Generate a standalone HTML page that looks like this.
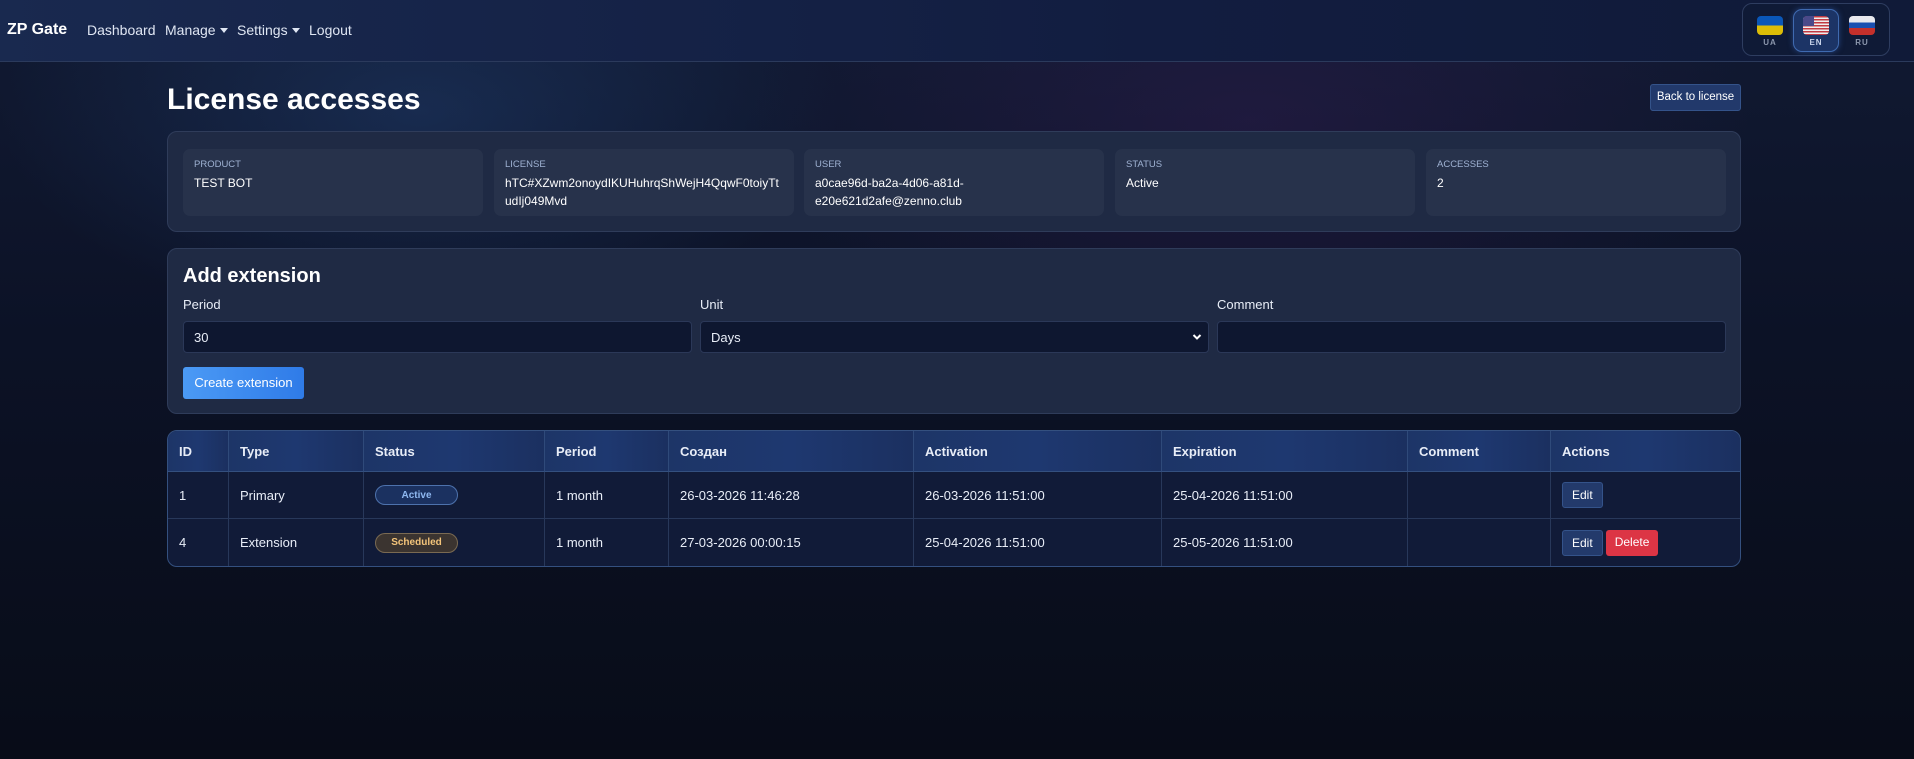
<!DOCTYPE html>
<html><head><meta charset="utf-8"><style>
*{box-sizing:border-box;margin:0;padding:0}
body{width:1914px;height:759px;overflow:hidden;font-family:"Liberation Sans","Noto Sans CJK SC",sans-serif;color:#e8edf7;font-size:14px;
background:radial-gradient(ellipse 420px 220px at 420px 110px,rgba(40,80,140,.35),transparent),radial-gradient(ellipse 500px 260px at 1250px 120px,rgba(60,30,90,.35),transparent),linear-gradient(180deg,#111a33 0%,#0c1226 45%,#080c18 100%);position:relative}
.a{position:absolute}
.nav{left:0;top:0;width:1914px;height:62px;background:linear-gradient(90deg,#19294f,#121d40 60%,#101a38);border-bottom:1px solid #2b3a5c}
.nav span{position:absolute;top:22px;font-size:14px;color:#dfe6f3}
.brand{font-weight:bold;font-size:16px!important;color:#fff!important;top:21px!important}
.car{display:inline-block;border-left:4px solid transparent;border-right:4px solid transparent;border-top:5px solid #dfe6f3;vertical-align:2px;margin-left:4px}
.lang{left:1742px;top:3px;width:148px;height:53px;border:1px solid #2e3d60;border-radius:10px;background:#0f1a36}
.flag{position:absolute;width:26px;height:19px;border-radius:4px;overflow:hidden;top:12px}
.ll{position:absolute;top:34px;font-size:8px;font-weight:bold;color:#8c97ad;letter-spacing:1px;width:30px;text-align:center}
.card{background:#1f2a44;border:1px solid #2f3c5a;border-radius:10px}
.box{position:absolute;top:17px;height:67px;width:300px;background:#27324b;border-radius:7px;padding:10px 11px}
.box .l{font-size:9.5px;color:#9fb2d3;text-transform:uppercase}
.box .v{font-size:12px;color:#fff;margin-top:4px;line-height:18px}
.inp{position:absolute;top:72px;height:32px;background:#0e1730;border:1px solid #2b3858;border-radius:4px;padding:8px 10px;font-size:13px;color:#e8edf7}
.lab{position:absolute;top:48px;font-size:13px;color:#e8edf7}
table{position:absolute;left:167px;top:430px;width:1574px;border-collapse:separate;border-spacing:0;border:1px solid #34507f;border-radius:10px;overflow:hidden;background:#111b38}
th{height:41px;background:linear-gradient(90deg,#1d3567,#1e3870 50%,#1b3060);text-align:left;font-weight:bold;font-size:13px;padding:0 11px;border-right:1px solid #2f4a7a;border-bottom:1px solid #34507f}
td{height:47px;padding:0 11px;font-size:13px;border-right:1px solid #28385a;border-bottom:1px solid #28385a}
tr:last-child td{border-bottom:none}
th:last-child,td:last-child{border-right:none}
.pill{display:inline-flex;align-items:center;justify-content:center;width:83px;height:20px;border-radius:10px;font-size:10px;font-weight:bold;vertical-align:middle}
.btn{display:inline-block;height:26px;padding:0 9px;line-height:25px;font-size:12px;border-radius:3px;vertical-align:middle}
.ed{background:#233a6b;border:1px solid #34538a;color:#fff}
.de{background:#dc3545;color:#fff;margin-left:3px}
</style></head><body>
<div class="a nav">
<span class="brand" style="left:7px">ZP Gate</span>
<span style="left:87px">Dashboard</span>
<span style="left:165px">Manage<i class="car"></i></span>
<span style="left:237px">Settings<i class="car"></i></span>
<span style="left:309px">Logout</span>
</div>
<div class="a lang">
<div class="flag" style="left:14px;background:linear-gradient(#0a57b8 50%,#dcbd07 50%)"></div>
<div class="ll" style="left:12px">UA</div>
<div style="position:absolute;left:50px;top:5px;width:46px;height:43px;border:1px solid #3f6ab0;border-radius:9px;background:#1c3466;box-shadow:0 0 6px rgba(60,110,200,.5)"></div>
<div class="flag" style="left:60px;background:repeating-linear-gradient(#c23a42 0 1.5px,#eee 1.5px 3px)"><div style="width:11px;height:10px;background:#4a4a8a"></div></div>
<div class="ll" style="left:58px;color:#c8d3ea">EN</div>
<div class="flag" style="left:106px;background:linear-gradient(#e9e9ee 33%,#1a4fb0 33% 62%,#c4302b 62%)"></div>
<div class="ll" style="left:104px">RU</div>
</div>
<div class="a" style="left:167px;top:83px;font-size:30px;font-weight:bold;color:#fff">License accesses</div>
<div class="a" style="left:1650px;top:84px;width:91px;height:27px;background:#22396b;border:1px solid #34538a;border-radius:3px;font-size:11.5px;line-height:25px;text-align:center;color:#fff">Back to license</div>
<div class="a card" style="left:167px;top:131px;width:1574px;height:101px">
<div class="box" style="left:15px"><div class="l">Product</div><div class="v">TEST BOT</div></div>
<div class="box" style="left:326px"><div class="l">License</div><div class="v">hTC#XZwm2onoydIKUHuhrqShWejH4QqwF0toiyTt udIj049Mvd</div></div>
<div class="box" style="left:636px"><div class="l">User</div><div class="v">a0cae96d-ba2a-4d06-a81d-<br>e20e621d2afe@zenno.club</div></div>
<div class="box" style="left:947px"><div class="l">Status</div><div class="v">Active</div></div>
<div class="box" style="left:1258px"><div class="l">Accesses</div><div class="v">2</div></div>
</div>
<div class="a card" style="left:167px;top:248px;width:1574px;height:166px">
<div style="position:absolute;left:15px;top:16px;font-size:20px;font-weight:bold;color:#fff">Add extension</div>
<div class="lab" style="left:15px">Period</div>
<div class="lab" style="left:532px">Unit</div>
<div class="lab" style="left:1049px">Comment</div>
<div class="inp" style="left:15px;width:509px">30</div>
<div class="inp" style="left:532px;width:509px">Days<svg style="position:absolute;right:6px;top:11px" width="10" height="8" viewBox="0 0 10 8"><path d="M1.5 2 5 5.5 8.5 2" stroke="#fff" stroke-width="2" fill="none"/></svg></div>
<div class="inp" style="left:1049px;width:509px"></div>
<div style="position:absolute;left:15px;top:118px;width:121px;height:32px;border-radius:3px;background:linear-gradient(90deg,#4b9af5,#2f7be8);font-size:13px;line-height:32px;text-align:center;color:#fff">Create extension</div>
</div>
<table>
<tr><th style="width:61px">ID</th><th style="width:135px">Type</th><th style="width:181px">Status</th><th style="width:124px">Period</th><th style="width:245px">Создан</th><th style="width:248px">Activation</th><th style="width:246px">Expiration</th><th style="width:143px">Comment</th><th>Actions</th></tr>
<tr><td>1</td><td>Primary</td><td><span class="pill" style="background:#1b3160;border:1px solid #4d72ad;color:#8fb8f0">Active</span></td><td>1 month</td><td>26-03-2026 11:46:28</td><td>26-03-2026 11:51:00</td><td>25-04-2026 11:51:00</td><td></td><td><span class="btn ed">Edit</span></td></tr>
<tr><td>4</td><td>Extension</td><td><span class="pill" style="background:#3b3430;border:1px solid #7a6a52;color:#f3c47a">Scheduled</span></td><td>1 month</td><td>27-03-2026 00:00:15</td><td>25-04-2026 11:51:00</td><td>25-05-2026 11:51:00</td><td></td><td><span class="btn ed">Edit</span><span class="btn de">Delete</span></td></tr>
</table>
</body></html>
